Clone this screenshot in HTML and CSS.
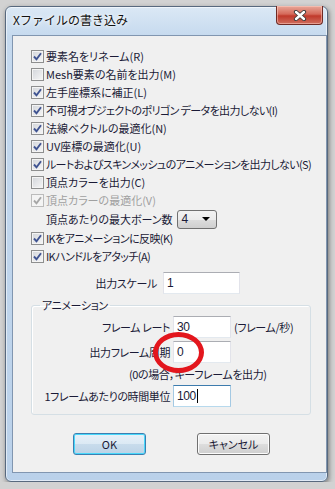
FILE: index.html
```html
<!DOCTYPE html>
<html lang="ja">
<head>
    <meta charset="UTF-8">
    <title>Xファイルの書き込み</title>
    <link rel="stylesheet" href="styles.css">
</head>
<body>
    <div class="window">
        <div class="titlebar">
            <span class="title">Xファイルの書き込み</span>
            <div class="close">
                <svg width="14" height="11" viewBox="0 0 14 11">
                    <path d="M3 2 L11 9 M11 2 L3 9" stroke="#3a3a3a" stroke-width="4.2" stroke-linecap="round"/>
                    <path d="M3 2 L11 9 M11 2 L3 9" stroke="#ffffff" stroke-width="2.4" stroke-linecap="round"/>
                </svg>
            </div>
        </div>
        <div class="frame">
            <div class="client">
                <div class="checks">
                    <div class="check"><span class="box"><svg viewBox="0 0 11 11"><path d="M2 5.5 L4.5 8.3 L9 2.3"/></svg></span>要素名をリネーム(R)</div>
                    <div class="check"><span class="box"></span>Mesh要素の名前を出力(M)</div>
                    <div class="check"><span class="box"><svg viewBox="0 0 11 11"><path d="M2 5.5 L4.5 8.3 L9 2.3"/></svg></span>左手座標系に補正(L)</div>
                    <div class="check tight"><span class="box"><svg viewBox="0 0 11 11"><path d="M2 5.5 L4.5 8.3 L9 2.3"/></svg></span>不可視オブジェクトのポリゴン データを出力しない(I)</div>
                    <div class="check"><span class="box"><svg viewBox="0 0 11 11"><path d="M2 5.5 L4.5 8.3 L9 2.3"/></svg></span>法線ベクトルの最適化(N)</div>
                    <div class="check"><span class="box"><svg viewBox="0 0 11 11"><path d="M2 5.5 L4.5 8.3 L9 2.3"/></svg></span>UV座標の最適化(U)</div>
                    <div class="check tight"><span class="box"><svg viewBox="0 0 11 11"><path d="M2 5.5 L4.5 8.3 L9 2.3"/></svg></span>ルートおよびスキンメッシュのアニメーションを出力しない(S)</div>
                    <div class="check"><span class="box"></span>頂点カラーを出力(C)</div>
                    <div class="check disabled"><span class="box"><svg viewBox="0 0 11 11"><path d="M2 5.5 L4.5 8.3 L9 2.3"/></svg></span>頂点カラーの最適化(V)</div>
                    <div class="bone-row">
                        <span>頂点あたりの最大ボーン数</span>
                        <div class="combo"><span>4</span><span class="arrow"></span></div>
                    </div>
                    <div class="check tight"><span class="box"><svg viewBox="0 0 11 11"><path d="M2 5.5 L4.5 8.3 L9 2.3"/></svg></span>IKをアニメーションに反映(K)</div>
                    <div class="check tight"><span class="box"><svg viewBox="0 0 11 11"><path d="M2 5.5 L4.5 8.3 L9 2.3"/></svg></span>IKハンドルをアタッチ(A)</div>
                </div>

                <div class="scale-row">
                    <span class="scale-label">出力スケール</span>
                    <div class="field scale-field">1</div>
                </div>

                <fieldset class="group">
                    <legend>アニメーション</legend>
                    <div class="anim-grid">
                        <span class="lbl">フレーム レート</span>
                        <div class="field">30</div>
                        <span class="unit">(フレーム/秒)</span>

                        <span class="lbl">出力フレーム周期</span>
                        <div class="field">0</div>
                        <span></span>

                        <span class="note">(0の場合，キーフレームを出力)</span>

                        <span class="lbl">1フレームあたりの時間単位</span>
                        <div class="field focused">100<span class="caret"></span></div>
                        <span></span>
                    </div>
                </fieldset>

                <div class="buttons">
                    <div class="btn default">OK</div>
                    <div class="btn">キャンセル</div>
                </div>

                <div class="ring"></div>
            </div>
        </div>
    </div>
</body>
</html>
```

FILE: styles.css
```css
body {
    margin: 0;
    background: #d2d2d2;
    font-family: "Noto Sans CJK JP", sans-serif;
    font-size: 11px;
    font-feature-settings: "palt";
    color: #1a1a36;
}
.window {
    margin: 6px 0 0 5px;
    width: 321px;
    height: 474px;
    border: 1px solid #58697e;
    border-radius: 6px;
    background: linear-gradient(#dbe8f5, #c5d9ee 30px, #bad1ea);
    box-shadow: 1px 2px 5px rgba(0, 0, 0, 0.45), inset 0 0 0 1px rgba(255, 255, 255, 0.55);
    display: flex;
    flex-direction: column;
}
.titlebar {
    height: 28px;
    display: flex;
    justify-content: space-between;
    align-items: flex-start;
    padding: 0 4px 0 7px;
    flex-shrink: 0;
}
.title {
    font-size: 12px;
    font-feature-settings: normal;
    line-height: 14px;
    margin-top: 6px;
    color: #111;
    text-shadow: 0 0 6px #fff, 0 0 3px #fff;
}
.close {
    width: 45px;
    height: 18px;
    margin-top: -1px;
    border: 1px solid #6e2a24;
    border-top: none;
    border-radius: 0 0 4px 4px;
    background: linear-gradient(#e9a899, #d5695a 45%, #c0392b 55%, #cf6e5e);
    box-shadow: inset 0 0 0 1px rgba(255, 210, 200, 0.5);
    display: flex;
    justify-content: center;
    align-items: center;
}
.frame {
    flex: 1;
    display: flex;
    padding: 0 5px 8px 6px;
}
.client {
    flex: 1;
    position: relative;
    border: 1px solid #8196b0;
    background: #f0f0f0;
    padding: 11px 15px 0 18px;
}
.check {
    display: flex;
    align-items: center;
    height: 18px;
    gap: 2px;
    white-space: nowrap;
}
.tight {
    letter-spacing: -0.6px;
}
.box {
    width: 11px;
    height: 11px;
    border: 1px solid #8e8f8f;
    background: linear-gradient(135deg, #d2d5da, #f7f7f7);
    box-shadow: inset 0 0 0 1px #f4f4f4;
    display: flex;
    flex-shrink: 0;
}
.box svg {
    width: 11px;
    height: 11px;
}
.box path {
    fill: none;
    stroke: #3f5391;
    stroke-width: 1.9;
}
.disabled {
    color: #a0a0a0;
}
.disabled .box {
    border-color: #bcbcbc;
    background: #f4f4f4;
}
.disabled .box path {
    stroke: #a6a6a6;
}
.bone-row {
    display: flex;
    align-items: center;
    height: 20px;
    padding-left: 15px;
    gap: 4px;
}
.combo {
    width: 28px;
    height: 17px;
    border: 1px solid #707070;
    border-radius: 3px;
    background: linear-gradient(#f2f2f2, #ebebeb 50%, #dddddd 50%, #cfcfcf);
    display: flex;
    align-items: center;
    justify-content: space-between;
    padding: 0 6px 0 4px;
    font-family: "Liberation Sans", sans-serif;
    font-size: 12px;
}
.arrow {
    width: 0;
    height: 0;
    border-left: 4px solid transparent;
    border-right: 4px solid transparent;
    border-top: 4px solid #000;
}
.scale-row {
    display: flex;
    align-items: center;
    gap: 6px;
    margin-top: 7px;
}
.scale-label {
    width: 126px;
    text-align: right;
    letter-spacing: -0.3px;
}
.field {
    height: 20px;
    border: 1px solid #e2e3ea;
    border-top-color: #abadb3;
    border-bottom-color: #e3e9ef;
    background: #fff;
    display: flex;
    align-items: center;
    padding-left: 3px;
    font-family: "Liberation Sans", sans-serif;
    font-size: 12px;
}
.scale-field {
    width: 72px;
}
.field.focused {
    border-color: #a4c9e3;
    border-top-color: #3d7bad;
    border-bottom-color: #b7d9ed;
}
.caret {
    width: 1px;
    height: 14px;
    background: #000;
    margin-left: 1px;
}
.group {
    margin: 3px 0 0 0;
    padding: 3px 0 7px 4px;
    border: 1px solid #d5dfe5;
    border-radius: 3px;
    box-shadow: inset 1px 1px 0 #fff;
    letter-spacing: -0.4px;
}
.group legend {
    margin-left: 4px;
    padding: 0 2px;
    line-height: 16px;
}
.anim-grid {
    display: grid;
    grid-template-columns: 134px 58px auto;
    column-gap: 3px;
    row-gap: 3px;
    align-items: center;
}
.lbl {
    text-align: right;
    white-space: nowrap;
}
.unit {
    white-space: nowrap;
}
.note {
    grid-column: 1 / -1;
    padding-left: 93px;
    line-height: 16px;
    white-space: nowrap;
}
.buttons {
    display: flex;
    gap: 51px;
    margin-top: 18px;
    padding-left: 42px;
}
.btn {
    width: 71px;
    height: 20px;
    border: 1px solid #707070;
    border-radius: 3px;
    background: linear-gradient(#f2f2f2, #ebebeb 50%, #dddddd 50%, #cfcfcf);
    box-shadow: inset 0 0 0 1px #fcfcfc;
    display: flex;
    justify-content: center;
    align-items: center;
}
.btn.default {
    border-color: #3c7fb1;
    background: linear-gradient(#e7f1f9, #dbe9f4 50%, #c8dcec 50%, #bcd3e6);
    box-shadow: inset 0 0 0 1px #48d8fb;
}
.ring {
    position: absolute;
    left: 140px;
    top: 296px;
    width: 51px;
    height: 41px;
    box-sizing: border-box;
    border: 5px solid #e3161d;
    border-radius: 50%;
}
```
